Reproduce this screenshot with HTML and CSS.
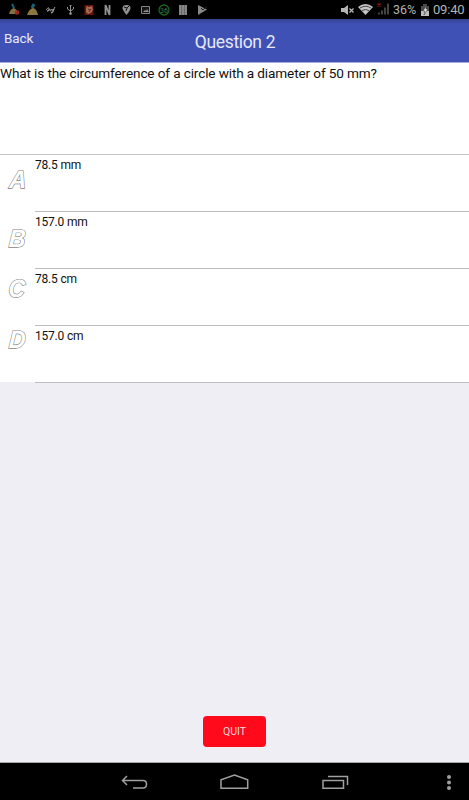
FILE: index.html
```html
<!DOCTYPE html>
<html lang="en">
<head>
<meta charset="utf-8">
<title>Question 2</title>
<link rel="stylesheet" href="styles.css">
</head>
<body>
<div class="screen">
  <div class="status">
    <svg class="notifications" width="214" height="19" viewBox="0 0 214 19">
      <path d="M12 4l2 4" stroke="#19627a" stroke-width="2"/>
      <path d="M9 14q1-5 5-6 4 2 4 6z" fill="#82713f"/>
      <circle cx="17" cy="12.500" r="2.200" fill="#a52420"/>
      <path d="M34 4l-2 4" stroke="#19627a" stroke-width="3"/>
      <path d="M27 15q2-6 6-7 4 1 5 7z" fill="#8c783f"/>
      <path d="M46 10q3-4 3-1t-2 2q2 0 3-2 0 4 2 0 0 3 2 0-1 5-3 4 2-2 4-6" fill="none" stroke="#9a9a9a"/>
      <g stroke="#929292" fill="none"><path d="M70.500 5v9M67.500 7v2l3 2 3-2V7"/><circle cx="70.500" cy="13.500" r="1" fill="#929292"/><path d="M69.500 6l1-1 1 1"/></g>
      <path d="M84.500 5h9v10h-9z" fill="#651411"/>
      <path d="M86 8l1-2 2 1 3-1 1 4-2 3-3 1-2-2z" fill="#a56a50"/>
      <path d="M88 9l2 1m1-1-2 3" stroke="#64231c"/>
      <path d="M105.500 15V5l4 10V5" fill="none" stroke="#919191" stroke-width="1.800"/>
      <path d="M126.500 15q-4-5-4-7 0-3 4-3t4 3q0 2-4 7z" fill="#929292"/>
      <path d="M124 7l3 1 2-2m-2 2-1 3" stroke="#161616" fill="none"/>
      <path d="M141.500 6.500h8v7h-8z" fill="#151515" stroke="#858585"/>
      <path d="M143 12l2-2 1 1 1-2 2 3z" fill="#8c8c8c"/>
      <circle cx="164" cy="10" r="5" fill="none" stroke="#19651c" stroke-width="1.300"/>
      <text x="164" y="12.500" class="badge">36</text>
      <path d="M179 5h8v10h-8z" fill="#858585"/>
      <path d="M181.500 5v10m3-10v10" stroke="#555" stroke-width=".6"/>
      <path d="M198 5l9 4.500-9 5.500z" fill="#888"/>
      <path d="M201 8l2 2 4-4" fill="none" stroke="#222" stroke-width="1"/>
    </svg>
    <svg class="system" width="53" height="19" viewBox="338 0 53 19">
      <path d="M341 8h3l4-3v10l-4-3h-3z" fill="#b5b5b5"/>
      <path d="M349.500 8.500l4 4m0-4-4 4" stroke="#b5b5b5" stroke-width="1.400"/>
      <path d="M358 7q7.500-6 15 0l-7.500 8z" fill="#c5c5c5"/>
      <path d="M360 8q6-3.500 11 0M362 10.500q3.500-2 7 0" stroke="#252525" fill="none" stroke-width=".8"/>
      <path d="M377.500 3.500l3 3m0-3-3 3" stroke="#9d1515" stroke-width="1.200"/>
      <path d="M379 12.500v2m3-4v4m3-7v7m3-11v11" stroke="#444" stroke-width="2"/>
    </svg>
    <span class="percent">36%</span>
    <svg class="battery" width="10" height="14" viewBox="0 0 10 14">
      <path d="M1 3h2V1h4v2h2v5H1z" fill="#4a4a4a"/>
      <path d="M1 8h8v5H1z" fill="#bebebe"/>
      <path d="M6 3L3 8h2l-1 4 4-6H6z" fill="#ddd" stroke="#333" stroke-width=".5"/>
    </svg>
    <span class="clock">09:40</span>
  </div>
  <header class="bar">
    <span class="back">Back</span>
    <h1 class="title">Question 2</h1>
    <span></span>
  </header>
  <main class="content">
    <p class="question">What is the circumference of a circle with a diameter of 50 mm?</p>
    <div class="answer"><svg class="letter" width="35" height="56"><text transform="translate(9 33) skewX(-4)" textLength="17" lengthAdjust="spacingAndGlyphs">A</text></svg><span class="value">78.5 mm</span></div>
    <div class="answer"><svg class="letter" width="35" height="56"><text transform="translate(8.500 34.500) skewX(-4)" textLength="16.500" lengthAdjust="spacingAndGlyphs">B</text></svg><span class="value">157.0 mm</span></div>
    <div class="answer"><svg class="letter" width="35" height="56"><text transform="translate(8 28) skewX(-4)" textLength="16.500" lengthAdjust="spacingAndGlyphs">C</text></svg><span class="value">78.5 cm</span></div>
    <div class="answer"><svg class="letter" width="35" height="56"><text transform="translate(8.500 21.500) skewX(-4)" textLength="16.500" lengthAdjust="spacingAndGlyphs">D</text></svg><span class="value">157.0 cm</span></div>
  </main>
  <div class="footer"><button class="quit">QUIT</button></div>
  <nav class="nav">
    <svg width="469" height="37" viewBox="0 763 469 37">
      <g fill="none" stroke="#a0a0a0" stroke-width="1.500">
        <path d="M127 776l-4.500 4.500 4.500 4.500M122.500 780.500H143q3.500 0 3.500 3.700t-3.500 3.700h-10"/>
        <path d="M221 788.200v-8.500l13.500-4.700 13.200 4.700v8.500z"/>
        <path d="M323 780.500h20.500v7.700H323zM328 776.500h19.500v8.500"/>
      </g>
      <g fill="#a0a0a0"><circle cx="449" cy="777" r="2"/><circle cx="449" cy="782.500" r="2"/><circle cx="449" cy="788" r="2"/></g>
    </svg>
  </nav>
</div>
</body>
</html>
```
FILE: styles.css
```css
* { box-sizing: border-box; }
body { margin: 0; font-family: Roboto, sans-serif; color: #111; }
svg { display: block; flex: none; }
.screen { width: 469px; height: 800px; display: flex; flex-direction: column; background: #efeef5; }
.status { height: 19px; display: flex; align-items: center; background: #000; color: #b4b4b4; font-size: 13px; line-height: 19px; }
.system { margin-left: 124px; }
.badge { font-size: 7px; fill: #3e7a40; text-anchor: middle; }
.percent { width: 27px; margin-left: 2px; font-size: 12.500px; }
.clock { margin-left: 3px; letter-spacing: -.2px; }
.bar { height: 44px; display: grid; grid-template-columns: 1fr auto 1fr; background: linear-gradient(#344392, #3f51b5 5px); border-bottom: 1px solid #a5aedb; color: #e6e8f7; }
.back { padding: 11px 0 0 4px; font-size: 13.500px; line-height: 17px; letter-spacing: -.1px; }
.title { margin: 0; padding: 12px 0 0 1px; font-size: 17.500px; font-weight: 400; line-height: 22px; letter-spacing: -.35px; }
.content { background: #fff; }
.question { height: 92px; margin: 0; padding-top: 2px; border-bottom: 1px solid #c5c5c5; font-size: 13.600px; line-height: 17px; letter-spacing: -.13px; white-space: nowrap; }
.answer { height: 57px; display: flex; }
.answer:last-child { background: linear-gradient(#fff 56px, #efeef5 56px); }
.letter text { font: italic 700 25px "Liberation Sans", sans-serif; fill: #fff; stroke: #858585; stroke-width: 1.300px; paint-order: stroke; }
.value { flex: 1; padding-top: 2px; border-bottom: 1px solid #bdbdbd; font-size: 12px; line-height: 16px; letter-spacing: -.25px; word-spacing: .4px; }
.footer { flex: 1; display: flex; align-items: flex-end; justify-content: center; padding-bottom: 15px; border-bottom: 1px solid #aaa; }
.quit { width: 63px; height: 31px; padding: 0; border: 0; border-radius: 4px; background: #ff0a1b; color: #ffd9dc; font: 10.500px Roboto, sans-serif; }
.nav { height: 37px; background: #000; }
```
